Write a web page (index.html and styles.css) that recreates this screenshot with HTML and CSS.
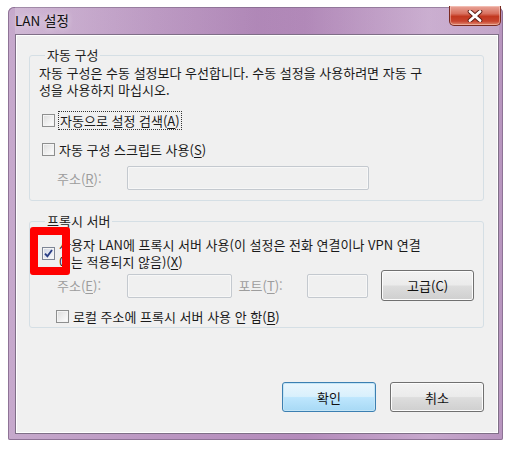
FILE: index.html
```html
<!DOCTYPE html>
<html lang="ko">
<head>
<meta charset="utf-8">
<title>LAN 설정</title>
<link rel="stylesheet" href="styles.css">
</head>
<body>
<div class="window">
  <div class="titlebar">
    <span class="title">LAN 설정</span>
    <span class="close" aria-label="닫기">
      <svg width="20" height="12" viewBox="0 0 20 12">
        <path d="M5 1.5 L15 10.5 M15 1.5 L5 10.5" stroke="#5a1a12" stroke-width="4.6" stroke-linecap="round"/>
        <path d="M5 1.5 L15 10.5 M15 1.5 L5 10.5" stroke="#ffffff" stroke-width="2.8" stroke-linecap="round"/>
      </svg>
    </span>
  </div>
  <div class="client">
    <fieldset class="group group-auto">
      <legend>자동 구성</legend>
      <p class="desc"><span class="line">자동 구성은 수동 설정보다 우선합니다. 수동 설정을 사용하려면 자동 구</span><span class="line">성을 사용하지 마십시오.</span></p>
      <label class="check">
        <span class="box"></span>
        <span class="focus">자동으로 설정 검색(<u>A</u>)</span>
      </label>
      <label class="check">
        <span class="box"></span>
        <span>자동 구성 스크립트 사용(<u>S</u>)</span>
      </label>
      <div class="field-row script-row">
        <span class="lbl disabled">주소(<u>R</u>):</span>
        <span class="input input-script"></span>
      </div>
    </fieldset>

    <fieldset class="group group-proxy">
      <legend>프록시 서버</legend>
      <label class="check multi">
        <span class="box checked">
          <svg width="9" height="9" viewBox="0 0 9 9"><path d="M1 4.6 L3.4 7.2 L8 1" fill="none" stroke="#2b3f86" stroke-width="1.9"/></svg>
        </span>
        <span class="lines"><span class="line">사용자 LAN에 프록시 서버 사용(이 설정은 전화 연결이나 VPN 연결</span><span class="line">에는 적용되지 않음)(<u>X</u>)</span></span>
      </label>
      <div class="field-row proxy-row">
        <span class="lbl disabled">주소(<u>E</u>):</span>
        <span class="input input-addr"></span>
        <span class="lbl disabled port-lbl">포트(<u>T</u>):</span>
        <span class="input input-port"></span>
        <span class="btn btn-adv">고급(C)</span>
      </div>
      <label class="check bypass">
        <span class="box"></span>
        <span>로컬 주소에 프록시 서버 사용 안 함(<u>B</u>)</span>
      </label>
    </fieldset>

    <div class="actions">
      <span class="btn btn-default">확인</span>
      <span class="btn">취소</span>
    </div>
  </div>
  <div class="highlight"></div>
</div>
</body>
</html>
```

FILE: styles.css
```css
* { box-sizing: border-box; }

html, body {
  margin: 0;
  padding: 0;
  background: #ffffff;
}

body {
  font-family: "Noto Sans CJK KR", "Noto Sans", sans-serif;
  font-size: 13px;
  color: #1a1a1a;
}

.window {
  position: relative;
  margin: 7px 0 0 8px;
  width: 495px;
  height: 433px;
  padding: 0 4px 6px 7px;
  border-radius: 6px 6px 2px 2px;
  background: linear-gradient(90deg, #c6a9cc 0%, #bb97c2 30%, #b48bbb 60%, #c7a8cd 85%, #b895bf 100%);
  box-shadow: inset 0 0 0 1px #8e7396;
  display: flex;
  flex-direction: column;
}

.titlebar {
  height: 27px;
  display: flex;
  align-items: flex-start;
  justify-content: space-between;
  background: linear-gradient(90deg, rgba(255,255,255,0.18), rgba(120,70,130,0.10) 50%, rgba(255,255,255,0.15));
}

.title {
  font-size: 13.5px;
  line-height: 16px;
  margin: 5px 0 0 0;
  color: #111;
  text-shadow: 0 0 6px rgba(255,255,255,0.8);
}

.close {
  width: 52px;
  height: 20px;
  margin: -1px -2px 0 0;
  border: 1px solid #7a2a20;
  border-top: none;
  border-radius: 0 0 5px 5px;
  background: linear-gradient(180deg, #e9a69a 0%, #d8705f 40%, #c2371f 55%, #c8442f 80%, #e08b72 100%);
  box-shadow: inset 0 0 0 1px rgba(255,220,210,0.45);
  display: flex;
  align-items: center;
  justify-content: center;
}

.client {
  flex: 1;
  background: #f0f0f0;
  border: 1px solid #7f6f87;
  box-shadow: inset 0 0 0 1px #ffffff;
  padding: 0 14px 0 13px;
  display: flex;
  flex-direction: column;
}

.group {
  margin: 0;
  border: 1px solid #d5dfe5;
  border-radius: 3px;
  min-width: 0;
}

.group legend {
  padding: 0 2px;
  margin-left: 6px;
  line-height: 16px;
  color: #222;
}

.group-auto {
  margin-top: 12px;
  padding: 1px 9px 10px 9px;
}

.group-proxy {
  margin-top: 12px;
  padding: 7px 9px 1px 9px;
}

.desc {
  margin: 0;
}

.line {
  display: block;
  height: 17px;
  line-height: 17px;
  white-space: nowrap;
}

.lines { display: block; }

.check {
  display: flex;
  align-items: center;
  gap: 4px;
  height: 20px;
  padding-left: 3px;
  line-height: 17px;
}

.group-auto .check { margin-top: 9px; }
.group-auto .check:first-of-type { margin-top: 12px; }

.check.multi {
  height: auto;
  align-items: center;
}

.check.bypass {
  margin-top: 5px;
  padding-left: 17px;
}

.box {
  flex: none;
  width: 13px;
  height: 13px;
  border: 1px solid #8e8f8f;
  background: linear-gradient(135deg, #dcdcdc 0%, #eeeeee 50%, #ffffff 100%);
  box-shadow: inset 0 0 0 1px #f4f4f4;
  display: flex;
  align-items: center;
  justify-content: center;
}

.box.checked {
  border-color: #7d8596;
  background: linear-gradient(135deg, #cfd5e3 0%, #e8ebf3 60%, #ffffff 100%);
}

.focus {
  outline: 1px dotted #333;
  outline-offset: 0;
  padding: 0 1px;
}

u { text-decoration: underline; text-underline-offset: 2px; }

.field-row {
  display: flex;
  align-items: center;
}

.script-row {
  margin-top: 7px;
  padding-left: 18px;
}

.lbl { line-height: 17px; }
.disabled { color: #9d9d9d; }

.input {
  height: 24px;
  border: 1px solid #c4c9cf;
  border-radius: 2px;
  background: #f0f0f0;
  box-shadow: inset 0 0 0 1px #f7f7f7;
}

.script-row .lbl { width: 70px; }
.input-script { width: 242px; }

.proxy-row {
  padding-left: 18px;
  height: 31px;
}
.proxy-row .lbl { width: 70px; }
.input-addr { width: 105px; }
.proxy-row .port-lbl { width: 69px; margin-left: 7px; }
.input-port { width: 61px; }

.btn {
  display: flex;
  align-items: center;
  justify-content: center;
  border: 1px solid #707070;
  border-radius: 3px;
  background: linear-gradient(180deg, #f2f2f2 0%, #ebebeb 48%, #dddddd 52%, #cfcfcf 100%);
  box-shadow: inset 0 0 0 1px #fcfcfc;
  color: #111;
  line-height: 17px;
}

.btn-adv {
  width: 93px;
  height: 31px;
  margin-left: 13px;
}

.actions {
  display: flex;
  justify-content: flex-end;
  gap: 14px;
  margin-top: 54px;
}

.actions .btn {
  width: 94px;
  height: 30px;
}

.btn-default {
  border-color: #3c7fb1;
  background: linear-gradient(180deg, #eaf6fd 0%, #d9f0fc 48%, #bee6fd 52%, #a7d9f5 100%);
  box-shadow: inset 0 0 0 1px #c4e5f6;
}

.highlight {
  position: absolute;
  left: 22px;
  top: 220px;
  width: 40px;
  height: 48px;
  border: 8px solid #ff0000;
  border-radius: 3px;
}
```
